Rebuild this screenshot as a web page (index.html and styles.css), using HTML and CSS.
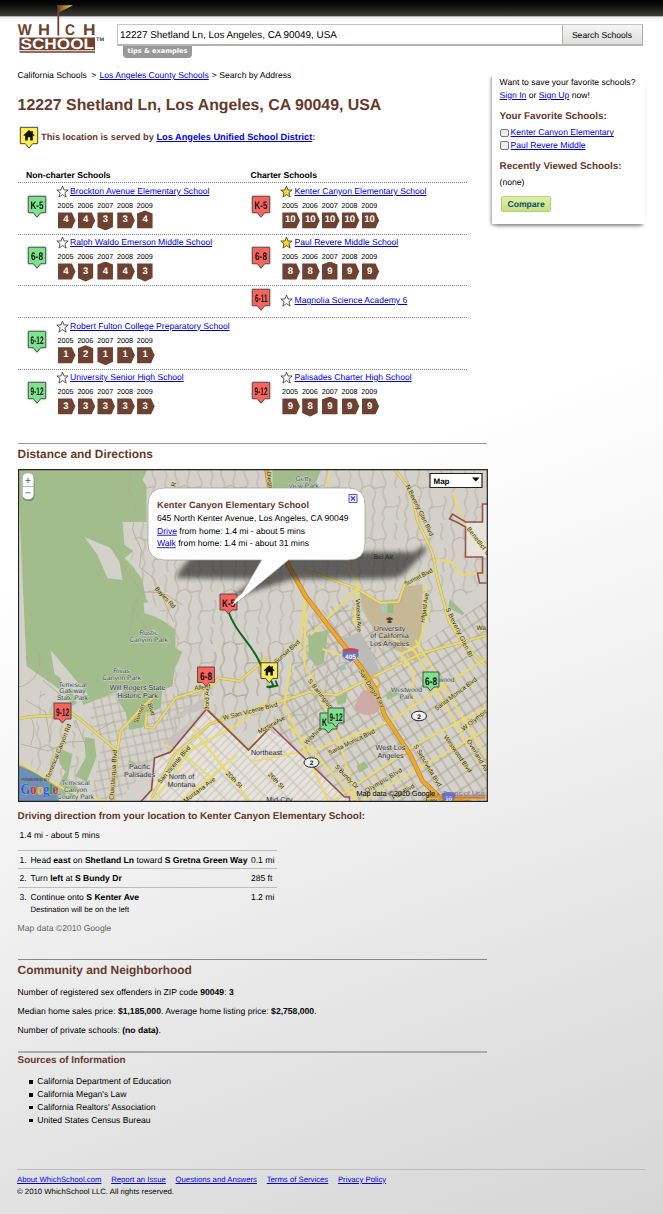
FILE: index.html
```html
<!DOCTYPE html>
<html lang="en">
<head>
<meta charset="utf-8">
<title>WhichSchool</title>
<link rel="stylesheet" href="styles.css">
</head>
<body>
<svg class="defs" width="0" height="0">
  <defs>
    <symbol id="star" viewBox="0 0 13 13"><path d="M6.500 1 8 5h4.200L8.900 7.700l1.200 4.400-3.600-2.500-3.600 2.500 1.200-4.400L.8 5H5z" stroke="#333" stroke-width=".8" stroke-linejoin="round"/></symbol>
    <symbol id="pin" viewBox="0 0 20 24"><path d="M1.300 1.300h17.400v16.400h-5L10 22.200l-3.700-4.500h-5z" stroke="#555" stroke-width="1"/></symbol>
    <symbol id="house" viewBox="0 0 20 24"><path d="M1.300 1.300h17.400v16.400h-5L10 22.200l-3.700-4.500h-5z" fill="#fbee4d" stroke="#444" stroke-width="1"/><path d="M10 4 4.400 9.200l.9.9.9-.8v5.200h2.600v-3.200h2.400v3.200h2.600V9.300l.9.8.9-.9-1.800-1.700V5h-1.500v1.100z" fill="#111"/></symbol>
  </defs>
</svg>
<div class="topbar"></div>
<header class="header">
  <svg class="logo" width="90" height="54" viewBox="16 2 90 54">
    <defs><linearGradient id="flag"><stop offset="0" stop-color="#6b3a1d"/><stop offset=".5" stop-color="#b98a22"/><stop offset="1" stop-color="#ffe05a"/></linearGradient></defs>
    <path d="M57.300 5.200H73L59 12.600z" fill="url(#flag)"/>
    <path d="M58.300 5v30.500" stroke="#6e4130" stroke-width="1.800"/>
    <g class="logo-which"><text x="17.800" y="35.400" textLength="14" lengthAdjust="spacingAndGlyphs">W</text><text x="38" y="35.400" textLength="12" lengthAdjust="spacingAndGlyphs">H</text><text x="65" y="35.400" textLength="10" lengthAdjust="spacingAndGlyphs">C</text><text x="83" y="35.400" textLength="12.500" lengthAdjust="spacingAndGlyphs">H</text></g>
    <path d="M19.500 37.500H95V50.300H19.500zM19.500 51.300H95v1.500H19.500z" fill="#6e4130"/>
    <text class="logo-school" x="20.500" y="49.300" textLength="73.500" lengthAdjust="spacingAndGlyphs">SCHOOL</text>
    <text class="logo-tm" x="96" y="41" textLength="8" lengthAdjust="spacingAndGlyphs">TM</text>
  </svg>
  <div class="search">
    <div class="search-bar"><div class="search-input">12227 Shetland Ln, Los Angeles, CA 90049, USA</div><div class="search-button">Search Schools</div></div>
    <div class="tips">tips &amp; examples</div>
  </div>
</header>
<div class="columns">
<main class="main">
  <nav class="crumbs"><span>California Schools</span><span>&gt;</span><a>Los Angeles County Schools</a><span>&gt; Search by Address</span></nav>
  <h1>12227 Shetland Ln, Los Angeles, CA 90049, USA</h1>
  <div class="served"><svg width="20" height="24"><use href="#house"/></svg><p>This location is served by <a>Los Angeles Unified School District</a>:</p></div>
  <div class="table">
    <div class="row head"><b>Non-charter Schools</b><b>Charter Schools</b></div>
    <div class="row">
      <div class="school"><svg class="pin green" width="20" height="24"><use href="#pin"/><text x="3.500" y="13.800" textLength="13" lengthAdjust="spacingAndGlyphs">K-5</text></svg>
        <div><div class="name"><svg class="star" width="13" height="13"><use href="#star"/></svg><a>Brockton Avenue Elementary School</a></div>
        <div class="years"><i>2005</i><i>2006</i><i>2007</i><i>2008</i><i>2009</i></div>
        <div class="scores"><b class="r">4</b><b class="r">4</b><b class="d">3</b><b class="r">3</b><b class="u">4</b></div></div></div>
      <div class="school"><svg class="pin red" width="20" height="24"><use href="#pin"/><text x="3.500" y="13.800" textLength="13" lengthAdjust="spacingAndGlyphs">K-5</text></svg>
        <div><div class="name"><svg class="star on" width="13" height="13"><use href="#star"/></svg><a>Kenter Canyon Elementary School</a></div>
        <div class="years"><i>2005</i><i>2006</i><i>2007</i><i>2008</i><i>2009</i></div>
        <div class="scores"><b class="r">10</b><b class="r">10</b><b class="r">10</b><b class="r">10</b><b class="r">10</b></div></div></div>
    </div>
    <div class="row">
      <div class="school"><svg class="pin green" width="20" height="24"><use href="#pin"/><text x="4" y="13.800" textLength="12" lengthAdjust="spacingAndGlyphs">6-8</text></svg>
        <div><div class="name"><svg class="star" width="13" height="13"><use href="#star"/></svg><a>Ralph Waldo Emerson Middle School</a></div>
        <div class="years"><i>2005</i><i>2006</i><i>2007</i><i>2008</i><i>2009</i></div>
        <div class="scores"><b class="r">4</b><b class="d">3</b><b class="u">4</b><b class="r">4</b><b class="d">3</b></div></div></div>
      <div class="school"><svg class="pin red" width="20" height="24"><use href="#pin"/><text x="4" y="13.800" textLength="12" lengthAdjust="spacingAndGlyphs">6-8</text></svg>
        <div><div class="name"><svg class="star on" width="13" height="13"><use href="#star"/></svg><a>Paul Revere Middle School</a></div>
        <div class="years"><i>2005</i><i>2006</i><i>2007</i><i>2008</i><i>2009</i></div>
        <div class="scores"><b class="r">8</b><b class="r">8</b><b class="u">9</b><b class="r">9</b><b class="r">9</b></div></div></div>
    </div>
    <div class="row short">
      <div class="school"></div>
      <div class="school"><svg class="pin red" width="20" height="24"><use href="#pin"/><text x="4" y="13.800" textLength="12.500" lengthAdjust="spacingAndGlyphs">6-11</text></svg>
        <div class="name"><svg class="star" width="13" height="13"><use href="#star"/></svg><a>Magnolia Science Academy 6</a></div></div>
    </div>
    <div class="row">
      <div class="school"><svg class="pin green" width="20" height="24"><use href="#pin"/><text x="3.500" y="13.800" textLength="13" lengthAdjust="spacingAndGlyphs">6-12</text></svg>
        <div><div class="name"><svg class="star" width="13" height="13"><use href="#star"/></svg><a>Robert Fulton College Preparatory School</a></div>
        <div class="years"><i>2005</i><i>2006</i><i>2007</i><i>2008</i><i>2009</i></div>
        <div class="scores"><b class="r">1</b><b class="u">2</b><b class="d">1</b><b class="r">1</b><b class="r">1</b></div></div></div>
      <div class="school"></div>
    </div>
    <div class="row">
      <div class="school"><svg class="pin green" width="20" height="24"><use href="#pin"/><text x="3.500" y="13.800" textLength="13" lengthAdjust="spacingAndGlyphs">9-12</text></svg>
        <div><div class="name"><svg class="star" width="13" height="13"><use href="#star"/></svg><a>University Senior High School</a></div>
        <div class="years"><i>2005</i><i>2006</i><i>2007</i><i>2008</i><i>2009</i></div>
        <div class="scores"><b class="r">3</b><b class="r">3</b><b class="r">3</b><b class="r">3</b><b class="r">3</b></div></div></div>
      <div class="school"><svg class="pin red" width="20" height="24"><use href="#pin"/><text x="3.500" y="13.800" textLength="13" lengthAdjust="spacingAndGlyphs">9-12</text></svg>
        <div><div class="name"><svg class="star" width="13" height="13"><use href="#star"/></svg><a>Palisades Charter High School</a></div>
        <div class="years"><i>2005</i><i>2006</i><i>2007</i><i>2008</i><i>2009</i></div>
        <div class="scores"><b class="r">9</b><b class="d">8</b><b class="u">9</b><b class="r">9</b><b class="r">9</b></div></div></div>
    </div>
  </div>

  <section class="distance">
    <h2>Distance and Directions</h2>
    <svg class="map" width="470" height="333" viewBox="17.500 469 470 333">
      <defs>
        <pattern id="hills" width="46" height="52" patternUnits="userSpaceOnUse"><path d="M4 0c3 9-5 13 1 20s-4 12 0 19-3 9-1 13M15 0c-5 8 6 12 1 19s5 14 0 21 2 8-1 12M26 3c6 6-3 11 2 17M30 52c-6-10 5-15 0-24M38 0c-5 10 5 12 1 21s4 13-1 19 1 9 0 12M5 20c5 1 7-2 11-1M16 40c6-3 9 1 13-3M39 21c3-3 5-2 7-4M0 17l5 3" fill="none" stroke="#b3aa98" stroke-width=".9"/></pattern>
        <pattern id="blocks" width="9" height="12" patternUnits="userSpaceOnUse" patternTransform="rotate(-33)"><path d="M0 1h9M1 0v12" stroke="#a89f8b" stroke-width=".9" fill="none"/></pattern>
        <pattern id="coast" width="8" height="9" patternUnits="userSpaceOnUse" patternTransform="rotate(-12)"><path d="M0 1h8M1 0v9" stroke="#b2aa98" stroke-width=".8" fill="none"/></pattern>
        <pattern id="monica" width="5.500" height="15" patternUnits="userSpaceOnUse" patternTransform="rotate(45)"><path d="M0 1h6M1 0v15" stroke="#c3bbae" stroke-width=".8" fill="none"/></pattern>
        <filter id="soft" x="-20%" y="-50%" width="140%" height="200%"><feGaussianBlur stdDeviation="2.600"/></filter>
      </defs>
      <path d="M17 469h471v333H17z" fill="#d4d1cb"/>
      <path d="M145 469h343v110l-80 60-50 30-60 70-70-10-50 10-60-100z" fill="url(#hills)"/>
      <path d="M342 600l40 30 30 20 75-50v202H318l-50-75 20-40 20-70z" fill="url(#blocks)"/>
      <path d="M208 640l90 10-18 55-60-10zM40 690l45 40-10 60-45-20z" fill="url(#hills)"/>
      <path d="M94 690l38-4-3 55-10 14-30-28zM120 700l80-10-30 50-50 60h-30l10-50z" fill="url(#coast)"/>
      <path d="M205 710l-36 44-16 5-2 32-6 11h207v-5h-8l-60-57-16-10-10 2-8 18z" fill="#e6e2dc"/>
      <path d="M205 710l-36 44-16 5-2 32-6 11h207v-5h-8l-60-57-16-10-10 2-8 18z" fill="url(#monica)"/>
      <path d="M465 523h17v-18h6v52h-23z" fill="#e6e2dc"/>
      <path d="M163 742l42-32-36 44zM167 720l38-23v12z" fill="#c7c3be"/>
      <g fill="#a2bd8b">
        <path d="M17 469h130l-5 11 4 6v36h-24l2 23 9 6-9 7 8 8 10 14 3 18 14 20 16 12v18l7 4-8 16-2 18-10 4-2 18-15 6-2 13-14 3-4-18-8-12 6-11-40 16-9-22-14-11v18l-34-24z"/>
        <path d="M272 469h49l-6 14-13 14-30-7zM308 634l20-4-5 33-6 3-9-9zM449 599l15 14-2 2-14-7zM70 687l6 16-4 3-7-10zM57 748l15 6-5 25 11 9-7 8-14-9 8-15-6-9zM84 737l10 2 2 18-10 25-11-6 10-18zM335 697l12-4-2 10-8 2zM385 695l8-8 6 7-12 6zM356 766l8-5 4 6-9 6zM19 764l48 26-3 9h-20zM128 760l8 3-8 7z"/>
      </g>
      <path d="M84 537l26 11 9 14 3 18-15-2-10-23zM143 603l9-1 7 8 12 13-8-2-10-5-9-3zM50 650l4 24 12 8 13 14 9-1-12-14z" fill="#d4d1cb"/>
      <path d="M17 765l20 9 20 14 2 14H17z" fill="#6f8fb4"/>
      <path d="M359 591l19 10 19-2 6-12 19-3-1 60-20 8-18-6-20-34z" fill="#c6b795"/>
      <path d="M404 648l12-2 6 18-12-5z" fill="#c6b795"/><path d="M338 640l22-8 20 40-16 6z" fill="#bdbbb8"/>
      <path d="M381 604h11v9h-11z" fill="#a8c7c0"/><path d="M387 604h6v9h-6z" fill="#99ba7f"/>
      <path d="M360 693c4-5 10-3 14-2l5 18c-6 10-20 6-25 0 0-7 4-8 6-16z" fill="#cfa9a5"/>
      <path d="M338 667l6-3 2 5-6 2z" fill="#9dbfbf"/>
      <g fill="none" stroke="#b3aa8e" stroke-width=".8"><path d="M132 470l-4 18 7 20-3 22 9 20-2 17 14 11 12 26 8 18"/><path d="M119 562l12 15 11 16-10 14 17 27M133 607l-4 28M147 592l16 1 19 12M30 645c20 12 5 40-12 42M42 680l17 14 23-3M20 744l28 7 20-9 22-1M90 735l24-14M25 700l20 12 5 30M75 720l10 25M28 715q10 10 2 30"/></g>
      <g fill="none" stroke="#b5a866" stroke-width="2.900"><path d="M17 719c20-5 31-1 54-6l7 5 39 33 3-20 21-23 15-14M146 712l-1 15 8 1 22-30 35-11 8-9 21 3 28-24M117 751l-5 51M206 686l-2 26M151 798l22-42 36-32 100-32 27 3 36-18 50-24 65-18M395 470l16 22 6 29 15 32 5 26 11 41 14 24 25 23M305 570l52 19 23 14 18-1 6-18 32-15"/></g>
      <g fill="none" stroke="#e9da70" stroke-width="2.100" stroke-linejoin="round"><path d="M17 719c20-5 31-1 54-6l7 5 39 33 3-20 21-23 15-14M146 712l-1 15 8 1 22-30 35-11 8-9 21 3 28-24M117 751l-5 51M206 686l-2 26M151 798l22-42 36-32 100-32 27 3 36-18 50-24 65-18M153 802l37-52 50-27 25-22M330 470l-5 18-21 15M305 570l52 19 23 14 18-1 6-18 32-15M346 561l12 27-16 15-32 32M357 589l-3 34 7 7M304 600l-5 50M395 470l16 22 6 29 15 32 5 26 11 41 14 24 25 23M436 559l14 3 12 13 26-4M452 492l8 25 6 12M425 584l3 29-10 32-18 10 13 16-1 35M386 635l28 16 52 91 22 28M305 600l-1 65 8 13 25 58 20 66M322 649l30 10M250 762l70-14 70-27 98-64M165 745l25 15 26 23M190 726l60 76M180 802l56-47M290 665l-6 40 44 97M288 725l70 77M330 802l90-60 68-36M415 640l73 120M360 802l128-74M17 761l50 30 40 11"/></g>
      <g fill="none" stroke-linejoin="round"><path d="M266 469l6 38 14 55 19 34 27 35 30 38 13 20 9 26 26 40 12 26 18 17 48 8" stroke="#bd8428" stroke-width="4.800"/><path d="M266 469l6 38 14 55 19 34 27 35 30 38 13 20 9 26 26 40 12 26 18 17 48 8" stroke="#eba92f" stroke-width="3.400"/><circle cx="372" cy="684" r="7" stroke="#e9ae3c" stroke-width="1.500"/><path d="M425 797h60" stroke="#dc972c" stroke-width="5"/></g>
      <path d="M140 802l11-12 3-32 16-6 36-43" fill="none" stroke="#8d4950" stroke-width="1.600"/><path d="M206 709l42 41 23-24" fill="none" stroke="#96592e" stroke-width="1.800"/><path d="M271 726l73 71h5v5M488 504h-6v18h-17l-13-8-3 5 7 3 9 5v30h17v16h-5l2 10h7" fill="none" stroke="#985052" stroke-width="1.600"/>
      <path d="M176 578c2-8 7-12 11-17l10-9h218c8-10 15-5 7 3l-20 20c-8 5-30 4-110 4l-64 20c12-8 18-15 29-20z" fill="#222" opacity=".65" filter="url(#soft)"/>
      <path d="M228 612c8 22 20 28 30 48 5 12 12 18 15 26l-7 1" fill="none" stroke="#14651c" stroke-width="2"/>
      <g class="road">
        <text x="154" y="589" transform="rotate(47 154 589)" textLength="27">Bayles Rd</text>
        <text x="175" y="487" transform="rotate(-80 175 487)">R</text><text x="266" y="472" transform="rotate(82 266 472)">Diego</text>
        <text x="405" y="486" transform="rotate(64 405 486)" textLength="56">N Beverly Glen Blvd</text>
        <text x="466" y="529" transform="rotate(52 466 529)" textLength="34">Benedict C</text>
        <text x="405" y="586" transform="rotate(-27 405 586)" textLength="31">Sunset Blvd</text>
        <text x="355" y="599" transform="rotate(87 355 599)" textLength="33">Veteran Ave</text>
        <text x="424" y="623" transform="rotate(-82 424 623)" textLength="30">Hilgard Ave</text>
        <text x="445" y="609" transform="rotate(64 445 609)" textLength="54">S Beverly Glen Bl</text>
        <text x="476" y="630">Wa</text>
        <text x="276" y="664" transform="rotate(-42 276 664)" textLength="32">Sunset Blvd</text>
        <text x="358" y="671" transform="rotate(58 358 671)" textLength="44">San Diego Fwy</text>
        <text x="307" y="681" transform="rotate(52 307 681)" textLength="36">S Barrington</text>
        <text x="223" y="720" transform="rotate(-14 223 720)" textLength="56">W San Vicente Blvd</text>
        <text x="259" y="734" transform="rotate(-30 259 734)" textLength="30">Montana Ave</text>
        <text x="306" y="745" transform="rotate(-45 306 745)" textLength="22">Wilshire</text>
        <text x="329" y="755" transform="rotate(-26 329 755)" textLength="51">Santa Monica Blvd</text>
        <text x="436" y="711" transform="rotate(-37 436 711)" textLength="51">Santa Monica Blvd</text>
        <text x="463" y="731" transform="rotate(-38 463 731)" textLength="31">W Olympic</text>
        <text x="334" y="767" transform="rotate(46 334 767)" textLength="31">S Bundy Dr</text>
        <text x="413" y="746" transform="rotate(59 413 746)" textLength="48">S Sepulveda Blvd</text>
        <text x="443" y="737" transform="rotate(55 443 737)" textLength="44">Westwood Blvd</text>
        <text x="466" y="741" transform="rotate(59 466 741)" textLength="36">Overland Av</text>
        <text x="366" y="793" transform="rotate(-31 366 793)" textLength="42">Olympic Blvd</text>
        <text x="393" y="800" transform="rotate(-31 393 800)" textLength="25">Pico Blvd</text>
        <text x="49" y="779" transform="rotate(-68 49 779)" textLength="58">Temescal Canyon Rd</text>
        <text x="113" y="800" transform="rotate(-86 113 800)" textLength="50">Chautauqua Blvd</text>
        <text x="137" y="724" transform="rotate(-68 137 724)" textLength="20">Sunset</text><text x="147" y="704" transform="rotate(72 147 704)">Blvd</text>
        <text x="194" y="690" transform="rotate(-5 194 690)">Allenf</text><text x="208" y="710" transform="rotate(-90 208 710)">3ord Av</text>
        <text x="160" y="784" transform="rotate(-50 160 784)" textLength="47">San Vicente Blvd</text>
        <text x="225" y="774" transform="rotate(45 225 774)" textLength="20">20th St</text><text x="267" y="775" transform="rotate(45 267 775)" textLength="20">26th St</text>
        <text x="185" y="803" transform="rotate(-37 185 803)" textLength="38">Montana Ave</text><text x="425" y="802">Fwy</text>
      </g>
      <g class="place">
        <text x="303" y="481">Getty</text><text x="303" y="488">View Park</text><text x="383" y="559" class="dim">Bel Air</text>
        <text x="148" y="635">Rustic</text><text x="148" y="642">Canyon Park</text>
        <text x="121" y="673">Rivas</text><text x="121" y="680">Canyon Park</text>
        <text x="137" y="690" class="mid">Will Rogers State</text><text x="137" y="698" class="mid">Historic Park</text>
        <text x="72" y="687">Temescal</text><text x="72" y="693">Gateway</text><text x="72" y="700">State Park</text>
        <text x="75" y="785">Temescal</text><text x="75" y="792">Canyon</text><text x="75" y="799">County Park</text>
        <text x="139" y="769" class="mid">Pacific</text><text x="139" y="777" class="mid">Palisades</text>
        <text x="181" y="779" class="mid">North of</text><text x="181" y="787" class="mid">Montana</text>
        <text x="266" y="755" class="mid">Northeast</text><text x="279" y="802" class="mid">Mid-City</text>
        <text x="389" y="631" class="mid">University</text><text x="389" y="638" class="mid">of California</text><text x="389" y="646" class="mid">Los Angeles</text>
        <text x="390" y="750" class="mid">West Los</text><text x="390" y="758" class="mid">Angeles</text>
        <text x="406" y="692">Westwood</text><text x="406" y="699">Park</text><text x="446" y="682">wood</text>
      </g>
      <path d="M385 619l4-2 4 2-4 2zM387 621h4v2h-4z" fill="#544238"/>
      <g fill="#eee" stroke="#222"><ellipse cx="418.500" cy="716" rx="7.500" ry="4.800"/><ellipse cx="311" cy="762.500" rx="7.500" ry="4.800"/></g>
      <g class="shield"><text x="418.500" y="718.500" fill="#111">2</text><text x="311" y="765" fill="#111">2</text></g>
      <path d="M342 651q8-3 16 0 2 5-2 8l-6 3-6-3q-4-3-2-8z" fill="#6870b8" stroke="#ddd" stroke-width=".6"/><path d="M342 649.500q8-3 16 0v2h-16z" fill="#c5494f"/><path d="M442 793q6-2 12 0 2 5-1 7l-5 2-5-2q-3-2-1-7z" fill="#6870b8"/>
      <g class="shield"><text x="350" y="658.500">405</text><text x="448" y="801">10</text></g>
      <g stroke="#999" stroke-width=".7" fill="#fff"><path d="M164.500 488h183q17 0 17 17v38q0 17-17 17H288l-52 43 25-43h-96.500q-17 0-17-17v-38q0-17 17-17z"/></g>
      <g stroke="#444" stroke-width=".9"><path fill="#f9635c" d="M219.500 594h17v16h-5l-3.500 4-3.500-4h-5zM197 667h17v15.500h-5l-3.500 4-3.500-4h-5zM53.500 703h17v16h-5l-3.500 4-3.500-4h-5z"/><path fill="#7be38c" d="M319.500 713h17v16h-5l-3.500 4-3.500-4h-5z"/><path fill="#7be38c" d="M327.500 708h16v15h-5l-3.500 4-3-4h-4.500zM422.500 672h16v15h-5l-3.500 4-3-4h-4.500z"/></g>
      <g class="pintext"><text x="221.500" y="606.500" textLength="13" lengthAdjust="spacingAndGlyphs">K-5</text><text x="199.500" y="679.500" textLength="12" lengthAdjust="spacingAndGlyphs">6-8</text><text x="55.500" y="716" textLength="13" lengthAdjust="spacingAndGlyphs">9-12</text><text x="321.500" y="725.500" textLength="5" lengthAdjust="spacingAndGlyphs">K</text><text x="329" y="720.500" textLength="13" lengthAdjust="spacingAndGlyphs">9-12</text><text x="424.500" y="684.500" textLength="12" lengthAdjust="spacingAndGlyphs">6-8</text></g>
      <path d="M231 606l5-8 20-16-5 8z" fill="#fff"/>
      <use href="#house" x="259" y="661.500" width="19.500" height="23"/>
      <path d="M268 687.500l9-2-2-5" fill="none" stroke="#14651c" stroke-width="1.800"/>
      <g class="info">
        <text class="info-title" x="156.500" y="508" textLength="152">Kenter Canyon Elementary School</text>
        <text x="156.500" y="520.800" textLength="191.500">645 North Kenter Avenue, Los Angeles, CA 90049</text>
        <text x="156.500" y="533.800" textLength="148"><tspan class="lnk">Drive</tspan> from home: 1.4 mi - about 5 mins</text>
        <text x="156.500" y="546.300" textLength="152"><tspan class="lnk">Walk</tspan> from home: 1.4 mi - about 31 mins</text>
      </g>
      <path d="M348.500 494.500h8v8h-8z" fill="#eef" stroke="#5557c8"/><path d="M350.500 496.500l4 4m0-4l-4 4" stroke="#4345c0" stroke-width="1.200"/>
      <rect x="22" y="474" width="12" height="27" rx="5" fill="#555" opacity=".6"/><rect x="21.800" y="473" width="11.500" height="26.500" rx="5" fill="#fff" stroke="#aaa" stroke-width=".6"/><path d="M22 486.500h11" stroke="#999" stroke-width=".7"/><path d="M25 480.500h5m-2.500-2.500v5M25 492.800h5" stroke="#5576b8" stroke-width="1.100"/>
      <path d="M429.500 473.500h52v14h-52z" fill="#fff" stroke="#222" stroke-width="1.200"/><text class="maptype" x="433" y="483.500" textLength="16">Map</text><path d="M471.500 477.500h7.500l-3.700 4z" fill="#000"/>
      <text class="powered" x="21" y="781" textLength="28" lengthAdjust="spacingAndGlyphs">POWERED BY</text>
      <text class="google" x="20" y="793.500" textLength="38" lengthAdjust="spacingAndGlyphs"><tspan fill="#2a5bd0">G</tspan><tspan fill="#c9342b">o</tspan><tspan fill="#e3b52a">o</tspan><tspan fill="#2a5bd0">g</tspan><tspan fill="#37963f">l</tspan><tspan fill="#c9342b">e</tspan></text>
      <text class="credit" x="356" y="796" textLength="83">Map data ©2010 Google -</text><text class="credit terms" x="442" y="796" textLength="42">Terms of Use</text>
      <path d="M18 469.700h468.800v331.600H18z" fill="none" stroke="#222" stroke-width="1.200"/>
    </svg>
    <h3 class="drive">Driving direction from your location to Kenter Canyon Elementary School:</h3>
    <p class="summary">1.4 mi - about 5 mins</p>
    <div class="steps">
      <div class="step"><span>1.</span><div>Head <b>east</b> on <b>Shetland Ln</b> toward <b>S Gretna Green Way</b></div><span>0.1 mi</span></div>
      <div class="step"><span>2.</span><div>Turn <b>left</b> at <b>S Bundy Dr</b></div><span>285 ft</span></div>
      <div class="step"><span>3.</span><div>Continue onto <b>S Kenter Ave</b><small>Destination will be on the left</small></div><span>1.2 mi</span></div>
    </div>
    <p class="mapdata">Map data ©2010 Google</p>
  </section>
  <section class="community">
    <h2>Community and Neighborhood</h2>
    <p>Number of registered sex offenders in ZIP code <b>90049</b>: <b>3</b></p>
    <p>Median home sales price: <b>$1,185,000</b>. Average home listing price: <b>$2,758,000</b>.</p>
    <p>Number of private schools: <b>(no data)</b>.</p>
  </section>
  <section class="sources">
    <h3>Sources of Information</h3>
    <ul><li>California Department of Education</li><li>California Megan's Law</li><li>California Realtors' Association</li><li>United States Census Bureau</li></ul>
  </section>
</main>
<aside class="side">
  <p>Want to save your favorite schools?<br><a>Sign In</a> or <a>Sign Up</a> now!</p>
  <h3>Your Favorite Schools:</h3>
  <div class="fav"><span class="box"></span><a>Kenter Canyon Elementary</a></div>
  <div class="fav"><span class="box"></span><a>Paul Revere Middle</a></div>
  <h3>Recently Viewed Schools:</h3>
  <div class="none">(none)</div>
  <div class="compare">Compare</div>
</aside>
</div>
<footer class="footer">
  <div class="links"><a>About WhichSchool.com</a><a>Report an Issue</a><a>Questions and Answers</a><a>Terms of Services</a><a>Privacy Policy</a></div>
  <div>© 2010 WhichSchool LLC. All rights reserved.</div>
</footer>
</body>
</html>
```
FILE: styles.css
```css
* { box-sizing: border-box; }
body { margin: 0; width: 663px; height: 1214px; overflow: hidden; font: 8.6px/13px "Liberation Sans", Arial, sans-serif; color: #000; background: linear-gradient(160deg, #fff 40%, #f1f1f1 62%, #dedede 88%, #d6d6d6 100%); text-rendering: geometricPrecision; }
p, h1, h2, h3, ul { margin: 0; padding: 0; }
a { color: #0000e6; text-decoration: underline; }
.defs { display: block; position: absolute; }
.topbar { height: 21px; background: linear-gradient(#000 0, #080808 4px, #3a3a38 15.5px, #777 16px, #ececec 17px, #fff 21px); }
.header { display: flex; height: 47px; padding-left: 16px; }
.logo { display: block; margin-top: -19px; flex: none; position: relative; }
.logo-which text { font: bold 15.5px "Liberation Sans", sans-serif; fill: #6e4130; }
.logo-school { font: bold 15px "Liberation Sans", sans-serif; fill: #fff; }
.logo-tm { font: bold 5px "Liberation Sans", sans-serif; fill: #333; }
.search { margin: 3px 0 0 11px; }
.search-bar { display: flex; width: 526px; height: 22px; border: 1px solid #c4c4c4; border-bottom: 2px solid #b4b4b4; border-right-color: #aaa; background: #fff; }
.search-input { width: 444px; padding-left: 2px; font-size: 9.9px; line-height: 21px; }
.search-button { flex: 1; border-left: 1px solid #b5b5b5; background: linear-gradient(#f5f5f5, #dedede); text-align: center; line-height: 20px; padding-right: 1px; }
.tips { margin-left: 6px; width: 69px; height: 11.5px; border-radius: 0 0 4px 4px; background: #989898; color: #fff; font: bold 6.6px/11px "DejaVu Sans", sans-serif; text-align: center; white-space: nowrap; }
.columns { display: flex; height: 1101px; }
.main { width: 469px; margin-left: 17.6px; flex: none; }
.crumbs { display: flex; gap: 3px; padding-top: 1px; height: 27px; }
.crumbs span:first-child { margin-right: 1.5px; }
h1 { font-size: 15.86px; line-height: 22px; color: #66392b; white-space: nowrap; }
.served { display: flex; gap: 2.5px; margin-top: 9px; height: 42px; font-size: 9.22px; font-weight: bold; color: #66392b; line-height: 24px; }
.served svg { margin: 0 0 0 1px; }
.served p { line-height: 22px; }
.table { width: 449.5px; }
.row { display: grid; grid-template-columns: 224.5px 224px; height: 51.2px; border-top: 1px dotted #888; }
.row.head { height: 14.4px; border: 0; padding: 1px 0 0 8.5px; }
.row.short { height: 32.6px; }
.school { display: flex; gap: 9px; padding-left: 9.2px; }
.pin { margin-top: 11.4px; flex: none; overflow: visible; filter: drop-shadow(0 0 1px #bbb); }
.short .pin { margin-top: 2.5px; }
.short .name { margin-top: 7px; }
.green { fill: #7be38c; }
.red { fill: #f9635c; }
.pin text, .pintext text { fill: #111; font: bold 11px "Liberation Sans Narrow", "Liberation Sans", sans-serif; }
.name { display: flex; gap: 1.3px; height: 16.5px; padding-top: 1.3px; }
.star { fill: #fff; margin-top: 0; flex: none; }
.star.on { fill: #ffd91c; }
.years, .scores { display: grid; grid-template-columns: repeat(5, 19.8px); padding-left: 1.8px; }
.years { height: 10.5px; font-size: 7.2px; line-height: 12px; }
.years i { font-style: normal; }
.scores b { width: 18px; height: 20px; padding-right: 2px; background: #6e4130; color: #fff; text-align: center; font-size: 9.5px; line-height: 20px; margin-left: .3px; }
.r { clip-path: polygon(0 2px, 14px 2px, 17.5px 10px, 14px 17.8px, 0 17.8px); }
.u { clip-path: polygon(0 3px, 8px 0, 15.5px 3px, 15.5px 17.8px, 0 17.8px); }
.d { clip-path: polygon(0 2px, 15.5px 2px, 15.5px 16.5px, 8px 20px, 0 16.5px); }
h2 { font-size: 11.88px; line-height: 21px; color: #66392b; }
h3 { font-size: 9.87px; line-height: 14px; color: #66392b; white-space: nowrap; }
.distance { margin-top: 23.2px; border-top: 1px solid #999; }
.distance h2 { height: 25px; }
.map { display: block; margin-left: 0; }
.road text { font: 6.4px "Liberation Sans", sans-serif; fill: #222; stroke: #e9df96; stroke-width: .9px; paint-order: stroke; }
.place text { font: 6.7px "Liberation Sans", sans-serif; fill: #2f4936; text-anchor: middle; stroke: #ddd; stroke-width: .9px; paint-order: stroke; }
.place .mid { font-size: 7.2px; fill: #2b2b2b; }
.place .dim { stroke: none; fill: #222; }
.shield text { font: bold 6.5px "Liberation Sans", sans-serif; fill: #fff; text-anchor: middle; }
.shield text[fill] { fill: #111; }
.info text { font: 8.6px "Liberation Sans", sans-serif; }
.info .info-title { font-size: 9.2px; font-weight: bold; fill: #66392b; }
.info .lnk { fill: #0000e6; text-decoration: underline; }
.maptype { font: bold 8px "Liberation Sans", sans-serif; }
.powered { font: 4.5px "Liberation Sans", sans-serif; fill: #333; }
.google { font: bold 15px "Liberation Serif", serif; stroke: #ddd; stroke-width: .5px; paint-order: stroke; }
.credit { font: 7.4px "Liberation Sans", sans-serif; }
.terms { fill: #7777cc; text-decoration: underline; }
.drive { margin-top: 8.5px; }
.summary { margin: 5px 0 7.5px 2px; }
.steps { width: 259.5px; }
.step { display: grid; grid-template-columns: 11px 220.5px 24px; padding: 3px 0 0 1.8px; height: 18.5px; border-top: 1px solid #bbb; white-space: nowrap; }
.step:last-child { height: 32px; }
.step small { display: block; font-size: 7.75px; line-height: 11px; }
.mapdata { margin-top: 3px; color: #666; }
.community { margin-top: 24px; border-top: 1px solid #888; height: 92px; }
.community p { height: 19px; }
.community h2 { height: 26px; }
.sources { border-top: 2px solid #aaa; padding-top: 1.5px; }
.sources ul { list-style: none; margin: 7px 0 0 11.7px; }
.sources li { display: flex; align-items: center; height: 12.9px; }
.sources li::before { content: ""; width: 3.5px; height: 3.5px; margin-right: 4.5px; background: #000; }
.side { margin: 6px 0 0 5px; width: 153px; height: 150px; padding: 2px 0 0 8px; background: #fff; box-shadow: -2px 2px 3px -1px #999, 0 4px 4px -3px #666; }
.side h3 { margin: 8px 0 2.3px; }
.fav { display: flex; gap: 2px; height: 12.7px; }
.box { width: 8.5px; height: 8.5px; margin: 2.5px 0 0 .5px; border: 1px solid #777; border-radius: 2px; background: #eee; }
.none { line-height: 13px; }
.compare { margin: 7px 0 0 1.5px; width: 50px; height: 16px; border: 1px solid #b7d078; border-radius: 2px; background: linear-gradient(#dff0a8, #c6df84); color: #0b4f68; font-weight: bold; text-align: center; line-height: 14px; }
.footer { margin-left: 17px; width: 628px; border-top: 1px solid #bbb; padding-top: 4px; font-size: 7.75px; line-height: 12px; }
.links { display: flex; gap: 9.7px; }
```
